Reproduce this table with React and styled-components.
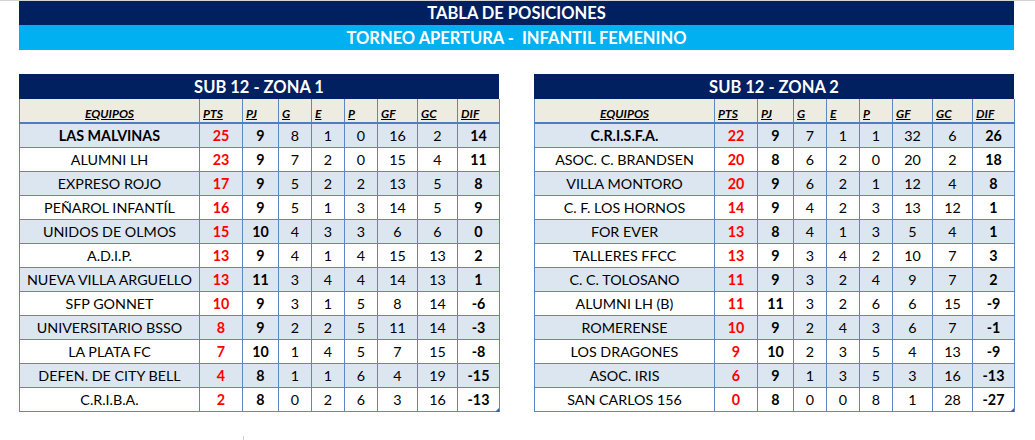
import React from "react";
import styled, { createGlobalStyle } from "styled-components";

const Global = createGlobalStyle`
  html, body { margin: 0; padding: 0; background: #fff; }
  body { font-family: Lato, "Open Sans", Arial, sans-serif; }
`;

const Page = styled.div`
  width: 1035px;
  height: 440px;
  position: relative;
  border-top: 1px solid #d4d4d4;
  box-sizing: border-box;
  padding-left: 19px;
`;

const Banner = styled.div`
  width: 995px;
  height: ${(p) => p.$h}px;
  background: ${(p) => p.$bg};
  color: #fff;
  font-weight: 700;
  font-size: 16.5px;
  display: flex;
  align-items: center;
  justify-content: center;
  white-space: pre;
`;

const Tables = styled.div`
  display: flex;
  gap: 35px;
  margin-top: 24px;
`;

const TableWrap = styled.div`
  width: 480px;
  position: relative;
`;

const Title = styled.div`
  height: 25px;
  background: #002060;
  color: #fff;
  font-weight: 700;
  font-size: 16.5px;
  display: flex;
  align-items: center;
  justify-content: center;
`;

const Table = styled.table`
  border-collapse: collapse;
  width: 480px;
  table-layout: fixed;
  font-size: 14.3px;
  color: #000;
`;

const HeadCell = styled.th`
  background: #eeece1;
  height: 24px;
  box-sizing: border-box;
  padding: 0 0 1px ${(p) => (p.$center ? 0 : 3)}px;
  border: 1px solid #5b87c4;
  border-top: none;
  border-bottom: 2px solid #4f7dc0;
  font-size: 12px;
  font-style: italic;
  font-weight: 700;
  text-decoration: underline;
  text-align: ${(p) => (p.$center ? "center" : "left")};
  vertical-align: bottom;
`;

const Row = styled.tr`
  background: ${(p) => (p.$alt ? "#dce6f1" : "#fff")};
`;

const Cell = styled.td`
  height: 23px;
  padding: 0;
  border: 1px solid #5b87c4;
  text-align: center;
  font-weight: ${(p) => (p.$bold ? 700 : 400)};
  color: ${(p) => (p.$red ? "#ff0000" : "#000")};
  white-space: nowrap;
`;

const Corner = styled.div`
  position: absolute;
  right: 0;
  bottom: 0;
  width: 0;
  height: 0;
  border-left: 4px solid transparent;
  border-bottom: 4px solid #3f5fbf;
`;

const Tick = styled.div`
  position: absolute;
  left: 243px;
  top: 435px;
  width: 1px;
  height: 5px;
  background: #cfcfcf;
`;

const widths = [180, 43, 36, 33, 33, 33, 40, 40, 42];
const heads = ["EQUIPOS", "PTS", "PJ", "G", "E", "P", "GF", "GC", "DIF"];

const zona1 = [
  ["LAS MALVINAS", 25, 9, 8, 1, 0, 16, 2, 14],
  ["ALUMNI LH", 23, 9, 7, 2, 0, 15, 4, 11],
  ["EXPRESO ROJO", 17, 9, 5, 2, 2, 13, 5, 8],
  ["PEÑAROL INFANTÍL", 16, 9, 5, 1, 3, 14, 5, 9],
  ["UNIDOS DE OLMOS", 15, 10, 4, 3, 3, 6, 6, 0],
  ["A.D.I.P.", 13, 9, 4, 1, 4, 15, 13, 2],
  ["NUEVA VILLA ARGUELLO", 13, 11, 3, 4, 4, 14, 13, 1],
  ["SFP GONNET", 10, 9, 3, 1, 5, 8, 14, -6],
  ["UNIVERSITARIO BSSO", 8, 9, 2, 2, 5, 11, 14, -3],
  ["LA PLATA FC", 7, 10, 1, 4, 5, 7, 15, -8],
  ["DEFEN. DE CITY BELL", 4, 8, 1, 1, 6, 4, 19, -15],
  ["C.R.I.B.A.", 2, 8, 0, 2, 6, 3, 16, -13],
];

const zona2 = [
  ["C.R.I.S.F.A.", 22, 9, 7, 1, 1, 32, 6, 26],
  ["ASOC. C. BRANDSEN", 20, 8, 6, 2, 0, 20, 2, 18],
  ["VILLA MONTORO", 20, 9, 6, 2, 1, 12, 4, 8],
  ["C. F. LOS HORNOS", 14, 9, 4, 2, 3, 13, 12, 1],
  ["FOR EVER", 13, 8, 4, 1, 3, 5, 4, 1],
  ["TALLERES FFCC", 13, 9, 3, 4, 2, 10, 7, 3],
  ["C. C. TOLOSANO", 11, 9, 3, 2, 4, 9, 7, 2],
  ["ALUMNI LH (B)", 11, 11, 3, 2, 6, 6, 15, -9],
  ["ROMERENSE", 10, 9, 2, 4, 3, 6, 7, -1],
  ["LOS DRAGONES", 9, 10, 2, 3, 5, 4, 13, -9],
  ["ASOC. IRIS", 6, 9, 1, 3, 5, 3, 16, -13],
  ["SAN CARLOS 156", 0, 8, 0, 0, 8, 1, 28, -27],
];

function Standings({ title, rows }) {
  return (
    <TableWrap>
      <Title>{title}</Title>
      <Table>
        <colgroup>
          {widths.map((w, i) => (
            <col key={i} style={{ width: w }} />
          ))}
        </colgroup>
        <thead>
          <tr>
            {heads.map((h, i) => (
              <HeadCell key={h} $center={i === 0}>
                {h}
              </HeadCell>
            ))}
          </tr>
        </thead>
        <tbody>
          {rows.map((r, ri) => (
            <Row key={r[0]} $alt={ri % 2 === 0}>
              {r.map((v, ci) => (
                <Cell
                  key={ci}
                  $red={ci === 1}
                  $bold={(ci === 0 && ri === 0) || ci === 1 || ci === 2 || ci === 8}
                >
                  {v}
                </Cell>
              ))}
            </Row>
          ))}
        </tbody>
      </Table>
      <Corner />
    </TableWrap>
  );
}

export default function App() {
  return (
    <>
      <Global />
      <Page>
        <Banner $bg="#002060" $h={24}>TABLA DE POSICIONES</Banner>
        <Banner $bg="#00b0f0" $h={25}>{"TORNEO APERTURA -  INFANTIL FEMENINO"}</Banner>
        <Tables>
          <Standings title="SUB 12 - ZONA 1" rows={zona1} />
          <Standings title="SUB 12 - ZONA 2" rows={zona2} />
        </Tables>
        <Tick />
      </Page>
    </>
  );
}
